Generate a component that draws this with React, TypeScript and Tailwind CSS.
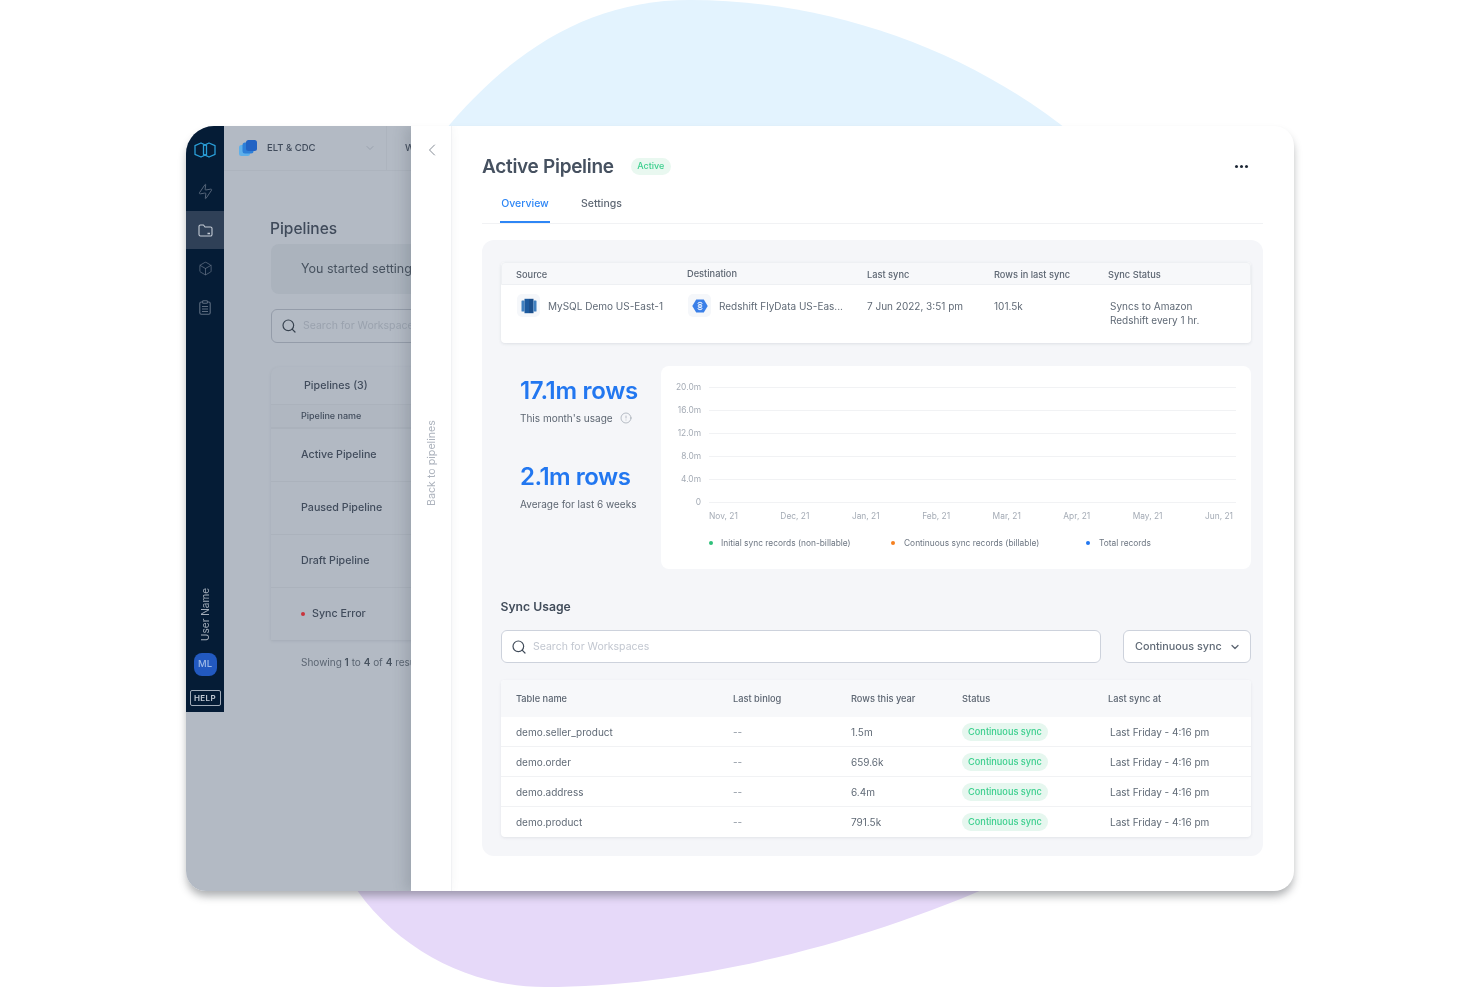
import { ChevronDown, ChevronLeft, CircleAlert, Search, Box, Zap } from "lucide-react";

function Logo() {
  return (
    <svg width="24" height="16" viewBox="0 0 24 16" fill="none" stroke="#2a9fd8" strokeWidth="1.3" strokeLinejoin="round">
      <path d="M8 1 L13.5 3.6 V12.4 L8 15 L2 12.4 V3.6 Z" />
      <path d="M16 1 L22 3.6 V12.4 L16 15 L10.5 12.4 V3.6 Z" />
    </svg>
  );
}

function StackLogo() {
  return (
    <svg width="18" height="16" viewBox="0 0 18 16">
      <rect x="0" y="5" width="11" height="11" rx="2.5" fill="#5fb0ea" />
      <rect x="3.5" y="2.5" width="11" height="11" rx="2.5" fill="#2d7fd8" />
      <rect x="7" y="0" width="11" height="11" rx="2.5" fill="#2263c4" />
    </svg>
  );
}

function FolderIcon() {
  return (
    <svg width="15" height="13" viewBox="0 0 15 13" fill="none" stroke="#c5ccd6" strokeWidth="1.1" strokeLinejoin="round">
      <path d="M1 2.5 A1.5 1.5 0 0 1 2.5 1 H5.5 L7 3 H12.5 A1.5 1.5 0 0 1 14 4.5 V10.5 A1.5 1.5 0 0 1 12.5 12 H2.5 A1.5 1.5 0 0 1 1 10.5 Z" />
      <path d="M9.5 9.5 H12" strokeWidth="1.4" />
    </svg>
  );
}

function ClipIcon() {
  return (
    <svg width="12" height="15" viewBox="0 0 12 15" fill="none" stroke="#5d6c80" strokeWidth="1.1" strokeLinejoin="round">
      <rect x="0.8" y="2" width="10.4" height="12.2" rx="1.4" />
      <rect x="3.6" y="0.7" width="4.8" height="2.6" rx="0.8" fill="#051c36" />
      <path d="M3 6.5 H9 M3 9 H9 M3 11.5 H9" />
    </svg>
  );
}

function RedshiftIcon() {
  return (
    <svg width="16" height="16" viewBox="0 0 16 16">
      <rect x="0.5" y="2.5" width="3" height="11" rx="0.6" fill="#3f7fbf" />
      <rect x="3.5" y="0.8" width="4.5" height="14.4" fill="#1d5a9e" />
      <rect x="8" y="0.8" width="4.5" height="14.4" fill="#1b4f8c" />
      <rect x="12.5" y="2.5" width="3" height="11" rx="0.6" fill="#3f7fbf" />
    </svg>
  );
}

function HexIcon() {
  return (
    <svg width="16" height="14" viewBox="0 0 16 14">
      <path d="M4.2 0.5 H11.8 L15.7 7 L11.8 13.5 H4.2 L0.3 7 Z" fill="#3a7fe8" />
      <ellipse cx="8" cy="4.4" rx="2" ry="1.1" fill="none" stroke="#fff" strokeWidth="0.9" />
      <ellipse cx="8" cy="7" rx="2" ry="1.1" fill="none" stroke="#fff" strokeWidth="0.9" />
      <ellipse cx="8" cy="9.6" rx="2" ry="1.1" fill="none" stroke="#fff" strokeWidth="0.9" />
    </svg>
  );
}

function SideBar() {
  return (
    <div className="w-[38px] h-[586px] shrink-0 bg-[#051c36] flex flex-col items-center">
      <div className="h-[45px] w-full flex items-center justify-center pt-[2px]">
        <Logo />
      </div>
      <div className="h-[40px] w-full flex items-center justify-center">
        <Zap size={17} strokeWidth={1.2} className="text-[#5d6c80] -rotate-[10deg]" />
      </div>
      <div className="h-[38px] w-full flex items-center justify-center bg-[#2f4057]">
        <FolderIcon />
      </div>
      <div className="h-[38px] w-full flex items-center justify-center">
        <Box size={15} strokeWidth={1.1} className="text-[#6a788b]" />
      </div>
      <div className="h-[40px] w-full flex items-center justify-center">
        <ClipIcon />
      </div>
      <div className="flex-1" />
      <span className="[writing-mode:vertical-rl] rotate-180 text-[10px] leading-none text-[#a2acb9]">User Name</span>
      <div className="mt-[12px] w-[23px] h-[23px] rounded-[8px] bg-[#2259c0] flex items-center justify-center text-[9.5px] font-medium text-[#9db9e6]">ML</div>
      <div className="mt-[14px] mb-[6px] w-[31px] h-[16px] border border-[#a2acb9] rounded-[2px] flex items-center justify-center text-[8px] font-semibold tracking-[0.4px] text-[#c5ccd6]">HELP</div>
    </div>
  );
}

function PipeRow({ label, dot, h }: { label: string; dot?: boolean; h: string }) {
  return (
    <div className={`${h} flex items-center pl-[30px] gap-[7px] border-t border-[#abb2bc] text-[10.7px] font-medium text-[#414c5c]`}>
      {dot && <span className="w-[4px] h-[4px] rounded-full bg-[#c9333c]" />}
      {label}
    </div>
  );
}

function LeftPanel() {
  return (
    <div className="w-[225px] shrink-0 bg-[#b3bac4] flex overflow-hidden">
      <SideBar />
      <div className="flex-1 min-w-0 overflow-hidden">
        <div className="w-[500px] h-[45px] flex items-center border-b border-[#adb4be]">
          <div className="pl-[15px] flex items-center w-[163px] h-full border-r border-[#adb4be]">
            <StackLogo />
            <span className="ml-[10px] text-[9.5px] font-medium text-[#414c5c]">ELT &amp; CDC</span>
            <ChevronDown size={12} className="ml-[49px] text-[#9aa2ae]" />
          </div>
          <span className="ml-[18px] text-[9.5px] font-medium text-[#414c5c]">Workspace</span>
        </div>
        <div className="w-[500px] pl-[47px]">
          <div className="mt-[46px] -ml-[1px] text-[15.5px] leading-[24px] font-medium text-[#3f4a5a]">Pipelines</div>
          <div className="mt-[3px] h-[50px] w-[400px] rounded-[8px] bg-[#abb3bd] pl-[30px] flex items-center text-[12.5px] text-[#47525f]">You started setting up a pipeline</div>
          <div className="mt-[15px] h-[34px] w-[400px] rounded-[6px] border border-[#949ca9] pl-[9px] flex items-center gap-[6px]">
            <Search size={16} strokeWidth={1.8} className="text-[#37424f]" />
            <span className="text-[10.5px] text-[#9aa2ae]">Search for Workspaces</span>
          </div>
          <div className="mt-[24px] w-[400px] rounded-t-[8px] bg-[#b2b9c3] shadow-[0_1px_3px_rgba(80,90,105,0.15)]">
            <div className="h-[37px] pl-[33px] pt-[2px] flex items-center text-[10.7px] font-medium text-[#414c5c]">Pipelines (3)</div>
            <div className="h-[24px] pl-[30px] flex items-center border-t border-b border-[#abb2bc] bg-[#b0b7c1] text-[9px] font-medium text-[#414c5c]">Pipeline name</div>
            <PipeRow label="Active Pipeline" h="h-[53px]" />
            <PipeRow label="Paused Pipeline" h="h-[53px]" />
            <PipeRow label="Draft Pipeline" h="h-[53px]" />
            <PipeRow label="Sync Error" dot h="h-[53px]" />
          </div>
          <div className="mt-[15px] pl-[30px] text-[10px] leading-[14px] text-[#5a6471]">
            Showing <b className="font-semibold text-[#47525f]">1</b> to <b className="font-semibold text-[#47525f]">4</b> of <b className="font-semibold text-[#47525f]">4</b> results
          </div>
        </div>
      </div>
    </div>
  );
}

function SourceTable() {
  return (
    <div className="h-[81px] rounded-[4px] bg-white shadow-[0_1px_3px_rgba(60,70,90,0.12)]">
      <div className="h-[23px] pl-[14px] pt-[2px] grid grid-cols-[171px_180px_127px_114px_1fr] items-center rounded-t-[4px] bg-[#f7f8fa] border border-[#eef0f3] text-[9.25px] font-medium text-[#5d6672]">
        <span>Source</span>
        <span className="-mt-[1px]">Destination</span>
        <span>Last sync</span>
        <span>Rows in last sync</span>
        <span>Sync Status</span>
      </div>
      <div className="pl-[16px] pt-[9px] grid grid-cols-[171px_179px_127px_116px_1fr] text-[10px] leading-[14px] text-[#606a76]">
        <div className="flex items-center gap-[8px] h-[23px]">
          <span className="w-[23px] h-[23px] rounded-[5px] bg-[#f5f7fa] flex items-center justify-center"><RedshiftIcon /></span>
          MySQL Demo US-East-1
        </div>
        <div className="flex items-center gap-[8px] h-[23px]">
          <span className="w-[23px] h-[23px] rounded-[5px] bg-[#f5f7fa] flex items-center justify-center"><HexIcon /></span>
          Redshift FlyData US-Eas...
        </div>
        <div className="h-[23px] flex items-center">7 Jun 2022, 3:51 pm</div>
        <div className="h-[23px] flex items-center">101.5k</div>
        <div className="pt-[5px]">Syncs to Amazon<br />Redshift every 1 hr.</div>
      </div>
    </div>
  );
}

function GridRow({ label, last }: { label: string; last?: boolean }) {
  return (
    <div className={`flex items-center gap-[8px] ${last ? "h-[10px]" : "h-[23px] items-start"}`}>
      <span className="w-[40px] shrink-0 text-right text-[8.4px] leading-[10px] text-[#a4abb5]">{label}</span>
      <span className={`flex-1 h-px bg-[#f1f2f4] ${last ? "" : "mt-[5px]"}`} />
    </div>
  );
}

function Chart() {
  const months = ["Nov, 21", "Dec, 21", "Jan, 21", "Feb, 21", "Mar, 21", "Apr, 21", "May, 21", "Jun, 21"];
  return (
    <div className="w-[590px] h-[203px] rounded-[8px] bg-white pt-[16px] pr-[15px]">
      <GridRow label="20.0m" />
      <GridRow label="16.0m" />
      <GridRow label="12.0m" />
      <GridRow label="8.0m" />
      <GridRow label="4.0m" />
      <GridRow label="0" last />
      <div className="ml-[48px] mr-[3px] mt-[2px] flex justify-between text-[8.4px] leading-[14px] text-[#a4abb5]">
        {months.map((m) => <span key={m}>{m}</span>)}
      </div>
      <div className="ml-[48px] mt-[13px] flex items-center text-[8.4px] leading-[14px] text-[#6d7682]">
        <span className="w-[4px] h-[4px] rounded-full bg-[#2fc07a] mr-[8px]" />
        <span className="w-[170px]">Initial sync records (non-billable)</span>
        <span className="w-[4px] h-[4px] rounded-full bg-[#f5801f] mr-[9px]" />
        <span className="w-[182px]">Continuous sync records (billable)</span>
        <span className="w-[4px] h-[4px] rounded-full bg-[#2277f0] mr-[9px]" />
        <span>Total records</span>
      </div>
    </div>
  );
}

function Stats() {
  return (
    <div className="mt-[23px] flex">
      <div className="w-[160px] shrink-0 pl-[19px] pt-[10px]">
        <div className="text-[24px] leading-[30px] font-semibold tracking-[-0.3px] text-[#2277f0]">17.1m rows</div>
        <div className="mt-[4px] flex items-center gap-[7px] text-[10px] leading-[16px] text-[#5d6672]">
          This month's usage
          <CircleAlert size={12} strokeWidth={1.2} className="text-[#8d95a1]" />
        </div>
        <div className="mt-[36px] text-[24px] leading-[30px] font-semibold tracking-[-0.5px] text-[#2277f0]">2.1m rows</div>
        <div className="mt-[4px] text-[10px] leading-[16px] text-[#5d6672]">Average for last 6 weeks</div>
      </div>
      <Chart />
    </div>
  );
}

const rows = [
  ["demo.seller_product", "1.5m"],
  ["demo.order", "659.6k"],
  ["demo.address", "6.4m"],
  ["demo.product", "791.5k"],
];

function SyncTable() {
  return (
    <div className="mt-[17px] rounded-[4px] bg-white shadow-[0_1px_3px_rgba(60,70,90,0.1)] overflow-hidden">
      <div className="h-[37px] pl-[15px] grid grid-cols-[217px_118px_111px_146px_1fr] items-center bg-[#f7f8fa] text-[9.25px] font-medium text-[#5d6672]">
        <span>Table name</span>
        <span>Last binlog</span>
        <span>Rows this year</span>
        <span>Status</span>
        <span>Last sync at</span>
      </div>
      {rows.map(([name, count], i) => {
        const shift = i < 3 ? "mt-[2px]" : "";
        return (
          <div key={name} className={`h-[30px] pl-[15px] grid grid-cols-[217px_118px_111px_148px_1fr] items-center text-[10px] text-[#606a76] ${i < 3 ? "border-b border-[#f1f2f4]" : ""}`}>
            <span className={shift}>{name}</span>
            <span className={`text-[#8d95a1] ${shift}`}>--</span>
            <span className={shift}>{count}</span>
            <span className="w-[86px] h-[18px] rounded-full bg-[#e6f7ef] flex items-center justify-center text-[9.2px] font-medium text-[#3ccf8e]">Continuous sync</span>
            <span className={shift}>Last Friday - 4:16 pm</span>
          </div>
        );
      })}
    </div>
  );
}

function Content() {
  return (
    <div className="flex-1 min-w-0 pt-[26px] pl-[30px] pr-[31px]">
      <div className="h-[28px] flex items-center pr-[15px]">
        <span className="mt-[2px] text-[19px] font-semibold text-[#465160] tracking-[-0.3px]">Active Pipeline</span>
        <span className="ml-[17px] h-[17px] px-[6.5px] rounded-full bg-[#e9f8f0] flex items-center text-[9px] font-medium text-[#3ccf8e]">Active</span>
        <span className="ml-auto flex gap-[2px]">
          <i className="w-[3px] h-[3px] rounded-full bg-[#1f2937]" />
          <i className="w-[3px] h-[3px] rounded-full bg-[#1f2937]" />
          <i className="w-[3px] h-[3px] rounded-full bg-[#1f2937]" />
        </span>
      </div>
      <div className="mt-[10px] h-[34px] flex pl-[18px] gap-[31px] border-b border-[#f1f2f4] text-[10.5px] font-medium">
        <span className="h-[33px] w-[50px] pt-[6px] text-center border-b-2 border-[#2e86f5] text-[#2e86f5]">Overview</span>
        <span className="pt-[6px] text-[#5f6874]">Settings</span>
      </div>
      <div className="mt-[16px] h-[616px] rounded-[12px] bg-[#f5f6f9] pt-[22px] pl-[19px] pr-[12px]">
        <SourceTable />
        <Stats />
        <div className="mt-[28px] -ml-[0.5px] h-[20px] text-[12.2px] leading-[20px] font-semibold text-[#414c5a]">Sync Usage</div>
        <div className="mt-[13px] flex justify-between">
          <div className="w-[600px] h-[33px] bg-white rounded-[6px] border border-[#cdd2dc] pl-[9px] flex items-center gap-[6px]">
            <Search size={16} strokeWidth={1.8} className="text-[#414c5a]" />
            <span className="text-[10.5px] text-[#c2c7d0]">Search for Workspaces</span>
          </div>
          <div className="w-[128px] h-[33px] bg-white rounded-[6px] border border-[#cdd2dc] pl-[11px] flex items-center text-[10.8px] font-medium text-[#606a76]">
            <span className="mt-[2px]">Continuous sync</span>
            <ChevronDown size={12} strokeWidth={2.5} className="ml-[7px] text-[#5d6672]" />
          </div>
        </div>
        <SyncTable />
      </div>
    </div>
  );
}

export default function App() {
  return (
    <div className="relative w-[1480px] h-[987px] overflow-hidden bg-white pt-[126px] pl-[186px] font-['Inter',sans-serif] blur-[0.3px]">
      <svg className="absolute inset-0" width="1480" height="987" viewBox="0 0 1480 987">
        <path d="M440 136 C 510 50 590 0 690 0 C 830 0 970 50 1075 136 Z" fill="#e3f3fe" />
        <path d="M350 880 C 395 950 470 987 545 987 C 690 987 860 945 1005 880 Z" fill="#e6d9f9" />
      </svg>
      <div className="relative w-[1108px] h-[765px] flex rounded-[20px] rounded-tl-[28px] overflow-hidden bg-white shadow-[0_6px_8px_-1px_rgba(50,55,60,0.4)]">
        <LeftPanel />
        <div className="w-[41px] shrink-0 border-r border-[#f1f2f4] flex flex-col items-center pt-[14px] pl-[2px] shadow-[-6px_0_12px_rgba(60,70,85,0.18)]">
          <ChevronLeft size={20} strokeWidth={1} className="text-[#6b7480]" />
          <span className="mt-[260px] [writing-mode:vertical-rl] rotate-180 text-[10.7px] text-[#adb3bd]">Back to pipelines</span>
        </div>
        <Content />
      </div>
    </div>
  );
}
